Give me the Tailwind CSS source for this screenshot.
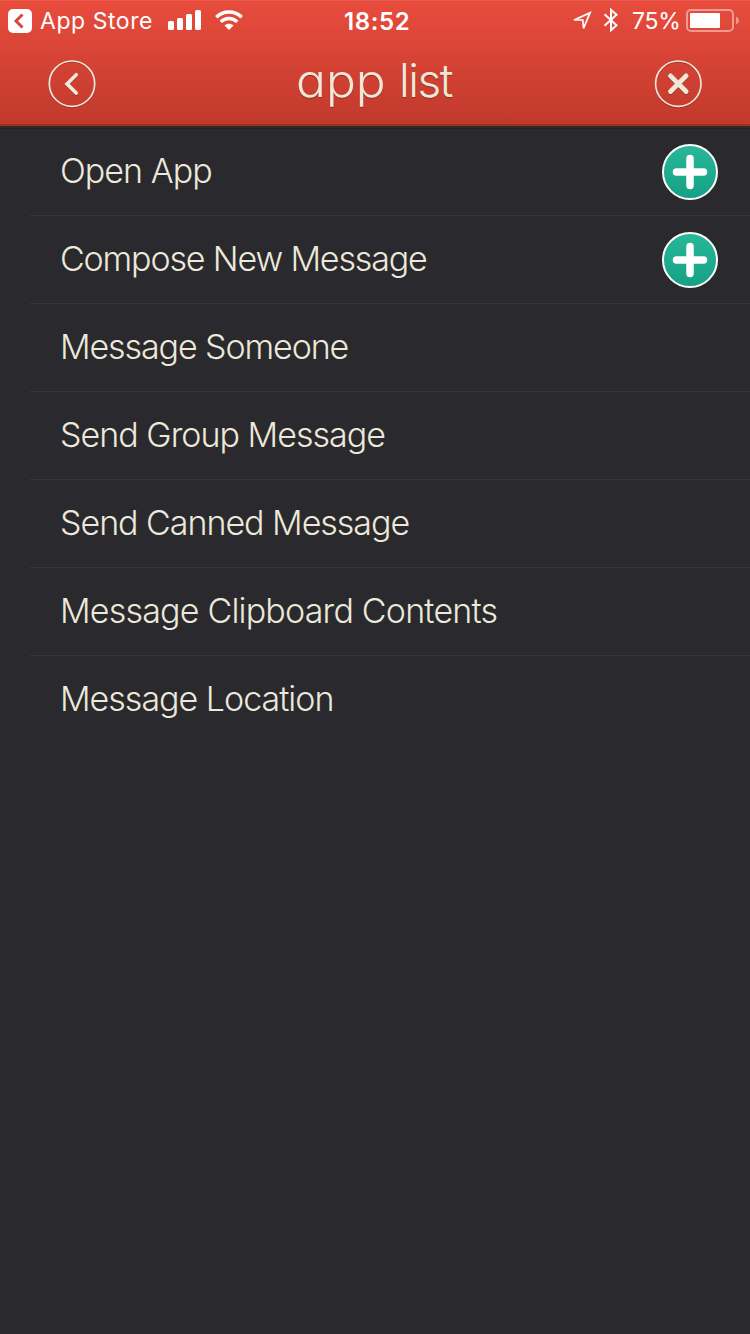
<!DOCTYPE html>
<html lang="en">
<head>
<meta charset="utf-8">
<title>app list</title>
<script src="https://cdn.jsdelivr.net/npm/@tailwindcss/browser@4"></script>
</head>
<body class="w-[750px] h-[1334px] overflow-hidden bg-[#2a292e] font-['Inter','Liberation_Sans',sans-serif] flex flex-col">
<header class="h-[128px] shrink-0 bg-linear-to-b from-[#e84c3d] to-[#c0392b] border-t border-t-[#eb5c4f] flex flex-col">
  <div class="h-[39px] flex items-center text-white text-[23px] leading-none">
    <svg class="ml-2 w-6 h-6" viewBox="0 0 24 24"><rect width="24" height="24" rx="5" fill="#fff"/><path d="M14.500 5.500L8 12l6.500 6.500" fill="none" stroke="#d9463a" stroke-width="2.900"/></svg>
    <span class="ml-2 pt-0.5 w-[120px] whitespace-nowrap tracking-[0.55px]">App Store</span>
    <svg class="ml-2 mb-0.5 w-[34px] h-5" viewBox="0 0 34 20" fill="#fff"><rect x="0" y="11" width="6" height="9" rx="1.500"/><rect x="9" y="8" width="6" height="12" rx="1.500"/><rect x="18" y="4" width="6" height="16" rx="1.500"/><rect x="27" y="0" width="6" height="20" rx="1.500"/></svg>
    <svg class="ml-[13px] mb-0.5 w-7 h-5" viewBox="0 0 28 20"><g fill="none" stroke="#fff" stroke-width="3.400"><path d="M1.300 7.200C8 .2 20 .2 26.700 7.200"/><path d="M5.700 11.800C10.500 7.300 17.500 7.300 22.300 11.800"/></g><path d="M14 20L9.500 15.500C12 13.300 16 13.300 18.500 15.500Z" fill="#fff"/></svg>
    <span class="ml-[101px] pt-0.5 w-[68px] whitespace-nowrap font-semibold text-[24px] tracking-[0.6px]">18:52</span>
    <svg class="ml-[160px] w-5 h-5" viewBox="0 0 20 20"><path d="M18 1.900L2 9H10.800L11.500 17.300Z" fill="none" stroke="#fff" stroke-width="1.700"/></svg>
    <svg class="ml-[11px] mb-0.5 w-[16px] h-6" viewBox="0 0 16 24"><path d="M1.500 6.300L13.500 17.300L8 22.200V1.800L13.500 6.700L1.500 17.700" fill="none" stroke="#fff" stroke-width="2"/></svg>
    <span class="ml-[13px] pt-0.5 w-[50px] whitespace-nowrap tracking-[-0.3px]">75%</span>
    <svg class="ml-1 w-[54px] h-6" viewBox="0 0 54 24"><rect x="1" y="1" width="46" height="21" rx="4" fill="none" stroke="#fff" stroke-opacity=".45" stroke-width="2"/><rect x="4" y="4" width="30" height="15" rx="1" fill="#fff"/><path d="M50 7.500Q53 9 53 11.500T50 15.500Z" fill="#fff" fill-opacity=".45"/></svg>
  </div>
  <div class="h-[84px] flex items-start justify-between px-12 pt-5">
    <svg class="w-12 h-12 drop-shadow-[0_1px_0_rgba(0,0,0,0.2)]" viewBox="0 0 48 48" fill="none" stroke="#efe8d8"><circle cx="24" cy="23.700" r="22.700" stroke-width="1.700"/><path d="M28.300 14.700L19 23.900L28.300 33.100" stroke-width="3.600" stroke-linecap="round"/></svg>
    <h1 class="w-[154px] h-12 flex justify-between text-[46px] leading-[40px] font-light text-[#efe8d8] whitespace-pre [font-feature-settings:'cv11'] [text-shadow:0_1px_1px_rgba(0,0,0,.3)]"><span class="origin-left scale-x-[1.08] -ml-0.5">app </span><span class="tracking-[-1.500px]">list</span></h1>
    <svg class="w-12 h-12 drop-shadow-[0_1px_0_rgba(0,0,0,0.2)]" viewBox="0 0 48 48" fill="none" stroke="#efe8d8"><circle cx="24.300" cy="23.700" r="22.700" stroke-width="1.700"/><path d="M16.500 15.900L32.100 31.500M32.100 15.900L16.500 31.500" stroke-width="4.800" stroke-linecap="round"/></svg>
  </div>
  <div class="h-[2px] bg-[#9e3027]"></div>
  <div class="h-[2px] bg-[#2d2b2a]"></div>
</header>
<ul class="pl-[30px] text-[34px] font-light text-[#ece9db] leading-none shadow-[inset_0_1px_0_#222124]">
  <li class="h-[88px] border-b border-[#36353b] pl-[30px] pr-8 flex items-center justify-between whitespace-nowrap"><span class="pb-0.5 tracking-[-0.950px]">Open App</span>
    <svg class="w-14 h-14" viewBox="0 0 56 56"><defs><linearGradient id="g" x1="0" y1="0" x2="0" y2="1"><stop stop-color="#28b899"/><stop offset="1" stop-color="#16a085"/></linearGradient></defs><circle cx="28" cy="28" r="27" fill="url(#g)" stroke="#fff" stroke-width="2"/><path d="M28 14.500V41.500M14.500 28H41.500" stroke="#fff" stroke-width="7.500" stroke-linecap="round"/></svg></li>
  <li class="h-[88px] border-b border-[#36353b] pl-[30px] pr-8 flex items-center justify-between whitespace-nowrap"><span class="pb-0.5 tracking-[-1.150px]">Compose New Message</span>
    <svg class="w-14 h-14" viewBox="0 0 56 56"><circle cx="28" cy="28" r="27" fill="url(#g)" stroke="#fff" stroke-width="2"/><path d="M28 14.500V41.500M14.500 28H41.500" stroke="#fff" stroke-width="7.500" stroke-linecap="round"/></svg></li>
  <li class="h-[88px] border-b border-[#36353b] pl-[30px] flex items-center whitespace-nowrap"><span class="pb-0.5 tracking-[-1.100px]">Message Someone</span></li>
  <li class="h-[88px] border-b border-[#36353b] pl-[30px] flex items-center whitespace-nowrap"><span class="pb-0.5 tracking-[-0.980px]">Send Group Message</span></li>
  <li class="h-[88px] border-b border-[#36353b] pl-[30px] flex items-center whitespace-nowrap"><span class="pb-0.5 tracking-[-1.030px]">Send Canned Message</span></li>
  <li class="h-[88px] border-b border-[#36353b] pl-[30px] flex items-center whitespace-nowrap"><span class="pb-0.5 tracking-[-0.800px]">Message Clipboard Contents</span></li>
  <li class="h-[88px] pl-[30px] flex items-center whitespace-nowrap"><span class="pb-0.5 tracking-[-1px]">Message Location</span></li>
</ul>
</body>
</html>
